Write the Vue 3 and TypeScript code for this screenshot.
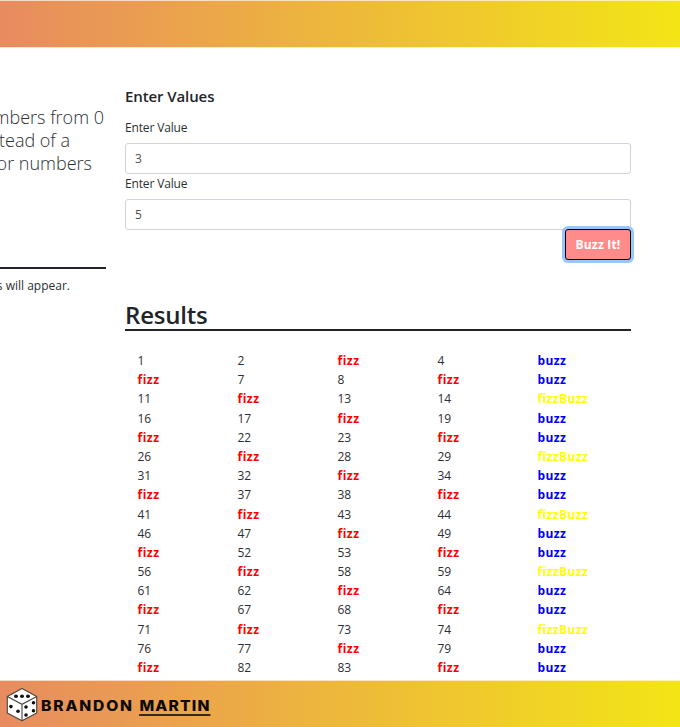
<script setup lang="ts">
import { computed, ref } from 'vue'

const fizz = ref('3')
const buzz = ref('5')

const cells = computed(() =>
  Array.from({ length: 85 }, (_, i) => {
    const n = i + 1
    const f = n % Number(fizz.value) === 0
    const b = n % Number(buzz.value) === 0
    if (f && b) return { text: 'fizzBuzz', kind: 'both' }
    if (f) return { text: 'fizz', kind: 'fizz' }
    if (b) return { text: 'buzz', kind: 'buzz' }
    return { text: String(n), kind: 'plain' }
  }),
)
</script>

<template>
  <div class="page">
    <header class="bar top"></header>
    <main class="content">
      <aside class="intro">
        <div class="lead">
          <div class="line one"><span>mbers from 0</span></div>
          <div class="line two"><span>tead of a</span></div>
          <div class="line three"><span>or numbers</span></div>
        </div>
        <div class="note"><span>s will appear.</span></div>
      </aside>
      <section class="main">
        <h5>Enter Values</h5>
        <label for="v1">Enter Value</label>
        <input id="v1" v-model="fizz" type="text" />
        <label for="v2" class="second">Enter Value</label>
        <input id="v2" v-model="buzz" type="text" />
        <div class="actions"><button type="button">Buzz It!</button></div>
        <h2>Results</h2>
        <div class="grid">
          <div v-for="(c, i) in cells" :key="i" :class="['cell', c.kind]">{{ c.text }}</div>
        </div>
      </section>
    </main>
    <footer class="bar bottom">
      <svg class="dice" viewBox="0 0 32 36" width="32" height="36">
        <path d="M16 1.5 30.7 9.5V26L16 33.8 1.3 26V9.5Z" fill="#fff" stroke="#4a4541" stroke-width="1.1" stroke-linejoin="round" />
        <path d="M1.3 9.5 16 17.3 30.7 9.5M16 17.3V33.8" fill="none" stroke="#4a4541" stroke-width="1.1" />
        <g fill="#111">
          <ellipse cx="10" cy="9.3" rx="2" ry="1.7" />
          <ellipse cx="16" cy="9.3" rx="2" ry="1.7" />
          <ellipse cx="22" cy="9.3" rx="2" ry="1.7" />
          <circle cx="4.9" cy="19.6" r="1.8" />
          <circle cx="12" cy="24.3" r="1.8" />
          <circle cx="20" cy="20" r="1.8" />
          <circle cx="27.5" cy="15.7" r="1.8" />
          <circle cx="20" cy="28" r="1.8" />
          <circle cx="27.5" cy="23.7" r="1.8" />
        </g>
      </svg>
      <div class="brand"><span class="first">BRANDON</span><span class="last">MARTIN</span></div>
    </footer>
  </div>
</template>

<style>
body {
  margin: 0;
  background: #fff;
}
</style>

<style scoped>
* {
  box-sizing: border-box;
}
.page {
  width: 680px;
  height: 727px;
  display: flex;
  flex-direction: column;
  overflow: hidden;
  font-family: 'Open Sans', 'Noto Sans', sans-serif;
  font-size: 12px;
  color: #2b2f33;
}
.bar {
  flex: none;
  background: linear-gradient(90deg, #e88b60, #f3e516);
}
.top {
  height: 48px;
  border-top: 1px solid rgba(255, 255, 255, 0.65);
  border-bottom: 1px solid rgba(255, 255, 255, 0.75);
}
.content {
  flex: 1;
  min-height: 0;
  display: flex;
  gap: 19px;
  overflow: hidden;
}
.intro {
  width: 106px;
  overflow: hidden;
}
.lead {
  height: 221px;
  padding-top: 58px;
  border-bottom: 2px solid #212529;
  font-size: 18px;
  font-weight: 300;
  line-height: 23px;
}
.line,
.note {
  display: flex;
  justify-content: flex-end;
  white-space: nowrap;
}
.one {
  padding-right: 2px;
}
.two {
  padding-right: 36px;
}
.three {
  padding-right: 14px;
}
.note {
  padding: 8px 36px 0 0;
  line-height: 18px;
}
.main {
  width: 506px;
  display: flex;
  flex-direction: column;
}
h5 {
  margin: 39px 0 0;
  height: 19px;
  line-height: 19px;
  font-size: 15px;
  font-weight: 600;
  letter-spacing: -0.1px;
  color: #212529;
}
label {
  height: 18px;
  margin: 13px 0 6px;
  line-height: 18px;
  letter-spacing: -0.15px;
}
label.second {
  margin: 1px 0 6px;
}
input {
  display: block;
  width: 100%;
  height: 31px;
  padding: 0 9px;
  border: 1px solid #ced4da;
  border-radius: 3px;
  background: #fff;
  font: inherit;
  color: #495057;
  outline: none;
}
.actions {
  display: flex;
  justify-content: flex-end;
}
button {
  width: 66px;
  height: 31px;
  margin-top: -1px;
  padding: 0;
  border: 1px solid #000;
  border-radius: 3px;
  background: #ff8b8b;
  box-shadow: 0 0 0 3px #99c6ff;
  color: #fff;
  font: 700 12px/29px 'Open Sans', 'Noto Sans', sans-serif;
  letter-spacing: 0.2px;
}
h2 {
  margin: 40px 0 20px;
  height: 31px;
  line-height: 30px;
  border-bottom: 2px solid #212529;
  font-size: 24px;
  font-weight: 600;
  letter-spacing: -0.2px;
  color: #212529;
}
.grid {
  display: grid;
  grid-template-columns: repeat(5, 100px);
  grid-auto-rows: 19.2px;
  padding-left: 12.5px;
  line-height: 19.2px;
}
.fizz {
  color: #f00;
  font-weight: 700;
  letter-spacing: 0.5px;
}
.buzz {
  color: #00f;
  font-weight: 700;
  letter-spacing: 0.4px;
}
.both {
  color: #ff0;
  font-weight: 700;
  letter-spacing: 0.4px;
}
.bottom {
  height: 47px;
  display: flex;
  align-items: flex-start;
  border-top: 1px solid rgba(255, 255, 255, 0.65);
  padding: 6px 0 0 6px;
}
.brand {
  display: flex;
  margin: 10px 0 0 3px;
  font-family: Inter, sans-serif;
  font-size: 14px;
  line-height: 17px;
  font-weight: 800;
  color: #0b0a08;
  transform: scaleX(1.115);
  transform-origin: 0 0;
}
.first {
  letter-spacing: 1.65px;
  margin-right: 5px;
}
.last {
  height: 19px;
  letter-spacing: 1.05px;
  border-bottom: 2px solid rgba(11, 10, 8, 0.8);
}
</style>
